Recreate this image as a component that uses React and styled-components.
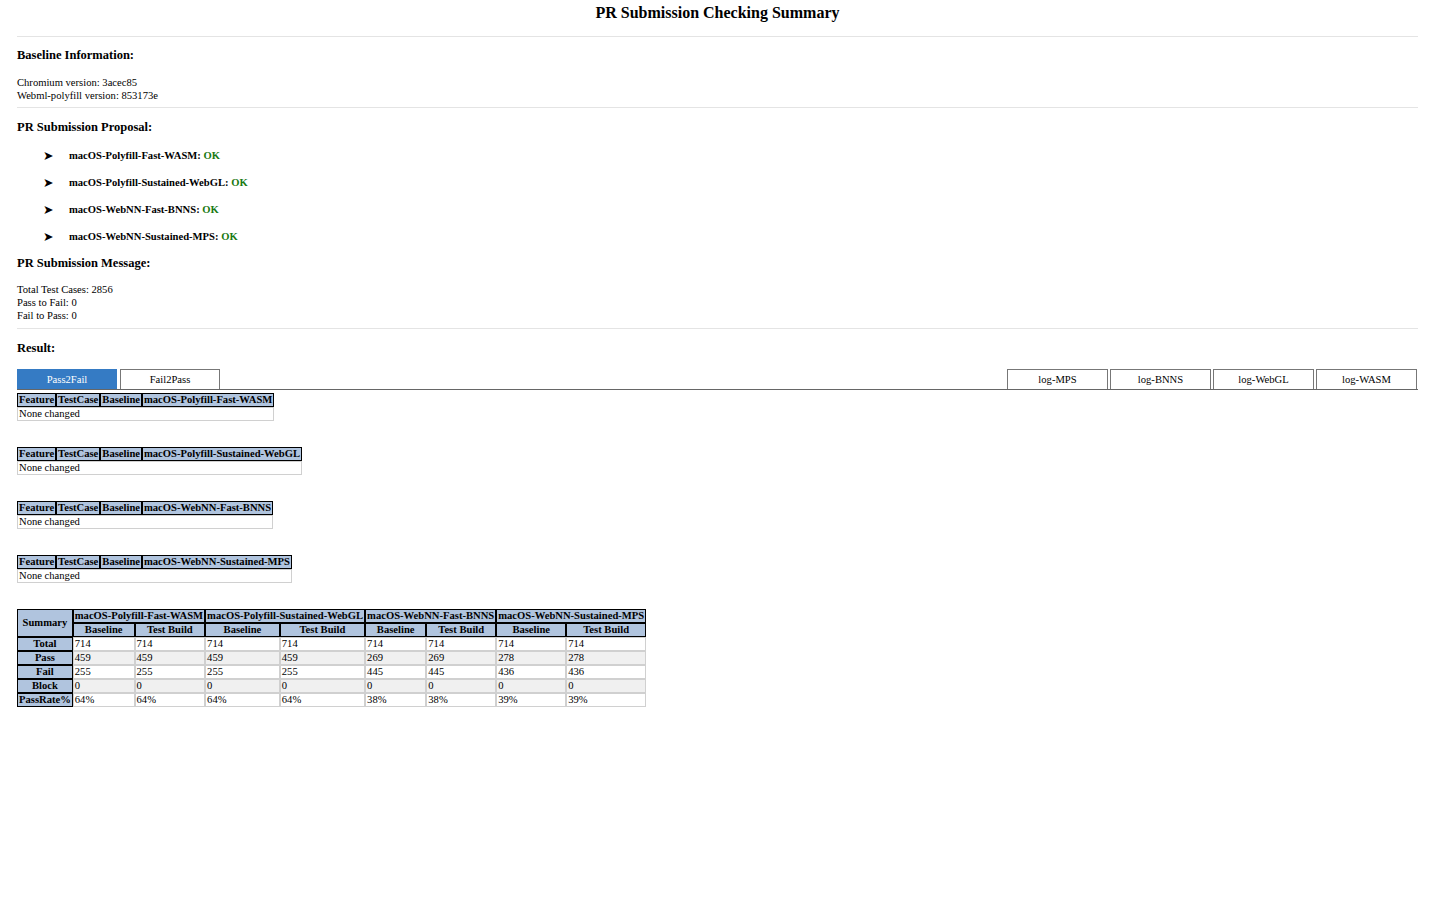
import { useState } from "react";
import styled, { createGlobalStyle } from "styled-components";

const configs = [
  "macOS-Polyfill-Fast-WASM",
  "macOS-Polyfill-Sustained-WebGL",
  "macOS-WebNN-Fast-BNNS",
  "macOS-WebNN-Sustained-MPS",
];

const summaryRows = [
  { name: "Total", values: ["714", "714", "714", "714", "714", "714", "714", "714"] },
  { name: "Pass", values: ["459", "459", "459", "459", "269", "269", "278", "278"] },
  { name: "Fail", values: ["255", "255", "255", "255", "445", "445", "436", "436"] },
  { name: "Block", values: ["0", "0", "0", "0", "0", "0", "0", "0"] },
  { name: "PassRate%", values: ["64%", "64%", "64%", "64%", "38%", "38%", "39%", "39%"] },
];

const logTabs = ["log-MPS", "log-BNNS", "log-WebGL", "log-WASM"];

function App() {
  const [activeTab, setActiveTab] = useState("Pass2Fail");

  return (
    <>
      <GlobalStyle />
      <Page>
        <Title>PR Submission Checking Summary</Title>
        <Rule $gap={14} />
        <SectionTitle $gap={11}>Baseline Information:</SectionTitle>
        <TextBlock $gap={13}>
          <div>Chromium version: 3acec85</div>
          <div>Webml-polyfill version: 853173e</div>
        </TextBlock>
        <Rule $gap={5} />
        <SectionTitle $gap={12}>PR Submission Proposal:</SectionTitle>
        <ProposalList>
          {configs.map((name) => (
            <ProposalItem key={name}>
              <Arrow>➤</Arrow>
              <span>
                {name}: <Ok>OK</Ok>
              </span>
            </ProposalItem>
          ))}
        </ProposalList>
        <SectionTitle $gap={13}>PR Submission Message:</SectionTitle>
        <TextBlock $gap={12}>
          <div>Total Test Cases: 2856</div>
          <div>Pass to Fail: 0</div>
          <div>Fail to Pass: 0</div>
        </TextBlock>
        <Rule $gap={6} />
        <SectionTitle $gap={12}>Result:</SectionTitle>

        <TabBar>
          <TabGroup $gap={3}>
            {["Pass2Fail", "Fail2Pass"].map((tab) => (
              <Tab
                key={tab}
                $active={activeTab === tab}
                onClick={() => setActiveTab(tab)}
              >
                {tab}
              </Tab>
            ))}
          </TabGroup>
          <TabGroup $gap={2} $end>
            {logTabs.map((tab) => (
              <Tab key={tab} $wide>
                {tab}
              </Tab>
            ))}
          </TabGroup>
        </TabBar>

        <Tables>
          {configs.map((name) => (
            <DataTable key={name}>
              <thead>
                <tr>
                  <Th>Feature</Th>
                  <Th>TestCase</Th>
                  <Th>Baseline</Th>
                  <Th>{name}</Th>
                </tr>
              </thead>
              <tbody>
                <tr>
                  <Td colSpan={4}>None changed</Td>
                </tr>
              </tbody>
            </DataTable>
          ))}

          <DataTable>
            <thead>
              <tr>
                <Th rowSpan={2}>Summary</Th>
                {configs.map((name) => (
                  <Th key={name} colSpan={2}>
                    {name}
                  </Th>
                ))}
              </tr>
              <tr>
                {configs.flatMap((name) => [
                  <Th key={name + "-b"} $wide>
                    Baseline
                  </Th>,
                  <Th key={name + "-t"} $wide>
                    Test Build
                  </Th>,
                ])}
              </tr>
            </thead>
            <tbody>
              {summaryRows.map((row, i) => (
                <SummaryRow key={row.name} $striped={i % 2 === 1}>
                  <Th>{row.name}</Th>
                  {row.values.map((v, j) => (
                    <Td key={j}>{v}</Td>
                  ))}
                </SummaryRow>
              ))}
            </tbody>
          </DataTable>
        </Tables>
      </Page>
    </>
  );
}

const GlobalStyle = createGlobalStyle`
  body {
    margin: 0;
    background: #ffffff;
    color: #000000;
    font-family: "Liberation Serif", "Times New Roman", serif;
  }
`;

const Page = styled.div`
  padding: 4px 22px 40px 17px;
`;

const Title = styled.h1`
  margin: 0;
  font-size: 16px;
  line-height: 18px;
  font-weight: bold;
  text-align: center;
`;

const Rule = styled.hr`
  margin: ${(p) => p.$gap}px 0 0 0;
  border: none;
  border-top: 1px solid #e4e4e4;
  height: 0;
`;

const SectionTitle = styled.h3`
  margin: ${(p) => p.$gap}px 0 0 0;
  font-size: 12.5px;
  line-height: 15px;
  font-weight: bold;
`;

const TextBlock = styled.div`
  margin-top: ${(p) => p.$gap}px;
  font-size: 10.6px;
  line-height: 13px;
`;

const ProposalList = styled.ul`
  margin: 0;
  padding: 14px 0 0 26px;
  list-style: none;
  display: flex;
  flex-direction: column;
  gap: 14px;
`;

const ProposalItem = styled.li`
  display: flex;
  align-items: center;
  font-size: 10.6px;
  line-height: 13px;
  font-weight: bold;
`;

const Arrow = styled.span`
  width: 26px;
  font-family: "DejaVu Sans", sans-serif;
  font-size: 12.5px;
  line-height: 13px;
`;

const Ok = styled.span`
  color: #1a7a12;
`;

const TabBar = styled.div`
  margin-top: 13px;
  display: flex;
  justify-content: space-between;
  align-items: flex-end;
  border-bottom: 1px solid #666666;
`;

const TabGroup = styled.div`
  display: flex;
  gap: ${(p) => p.$gap}px;
  ${(p) => p.$end && "padding-right: 1px;"}
`;

const Tab = styled.button`
  width: ${(p) => (p.$wide ? 101 : 100)}px;
  height: 20px;
  padding: 0;
  border: 1px solid #777777;
  border-bottom: none;
  background: ${(p) => (p.$active ? "#357bc4" : "#ffffff")};
  color: ${(p) => (p.$active ? "#ffffff" : "#000000")};
  font-family: "Liberation Serif", "Times New Roman", serif;
  font-size: 10.6px;
  cursor: pointer;
  ${(p) => p.$active && "border-color: #357bc4;"}
`;

const Tables = styled.div`
  margin-top: 3px;
  display: flex;
  flex-direction: column;
  align-items: flex-start;
  gap: 26px;
`;

const DataTable = styled.table`
  border-collapse: separate;
  border-spacing: 0;
  font-size: 10.6px;
  line-height: 12px;
`;

const Th = styled.th`
  background: #b0c4de;
  border: 1px solid #000000;
  padding: 0 1px;
  font-weight: bold;
  white-space: nowrap;
  ${(p) => p.$wide && "padding: 0 9px;"}
`;

const Td = styled.td`
  border: 1px solid #d0d0d0;
  padding: 0 1px;
  text-align: left;
  white-space: nowrap;
`;

const SummaryRow = styled.tr`
  background: ${(p) => (p.$striped ? "#f0f0f0" : "#ffffff")};
`;

export default App;
